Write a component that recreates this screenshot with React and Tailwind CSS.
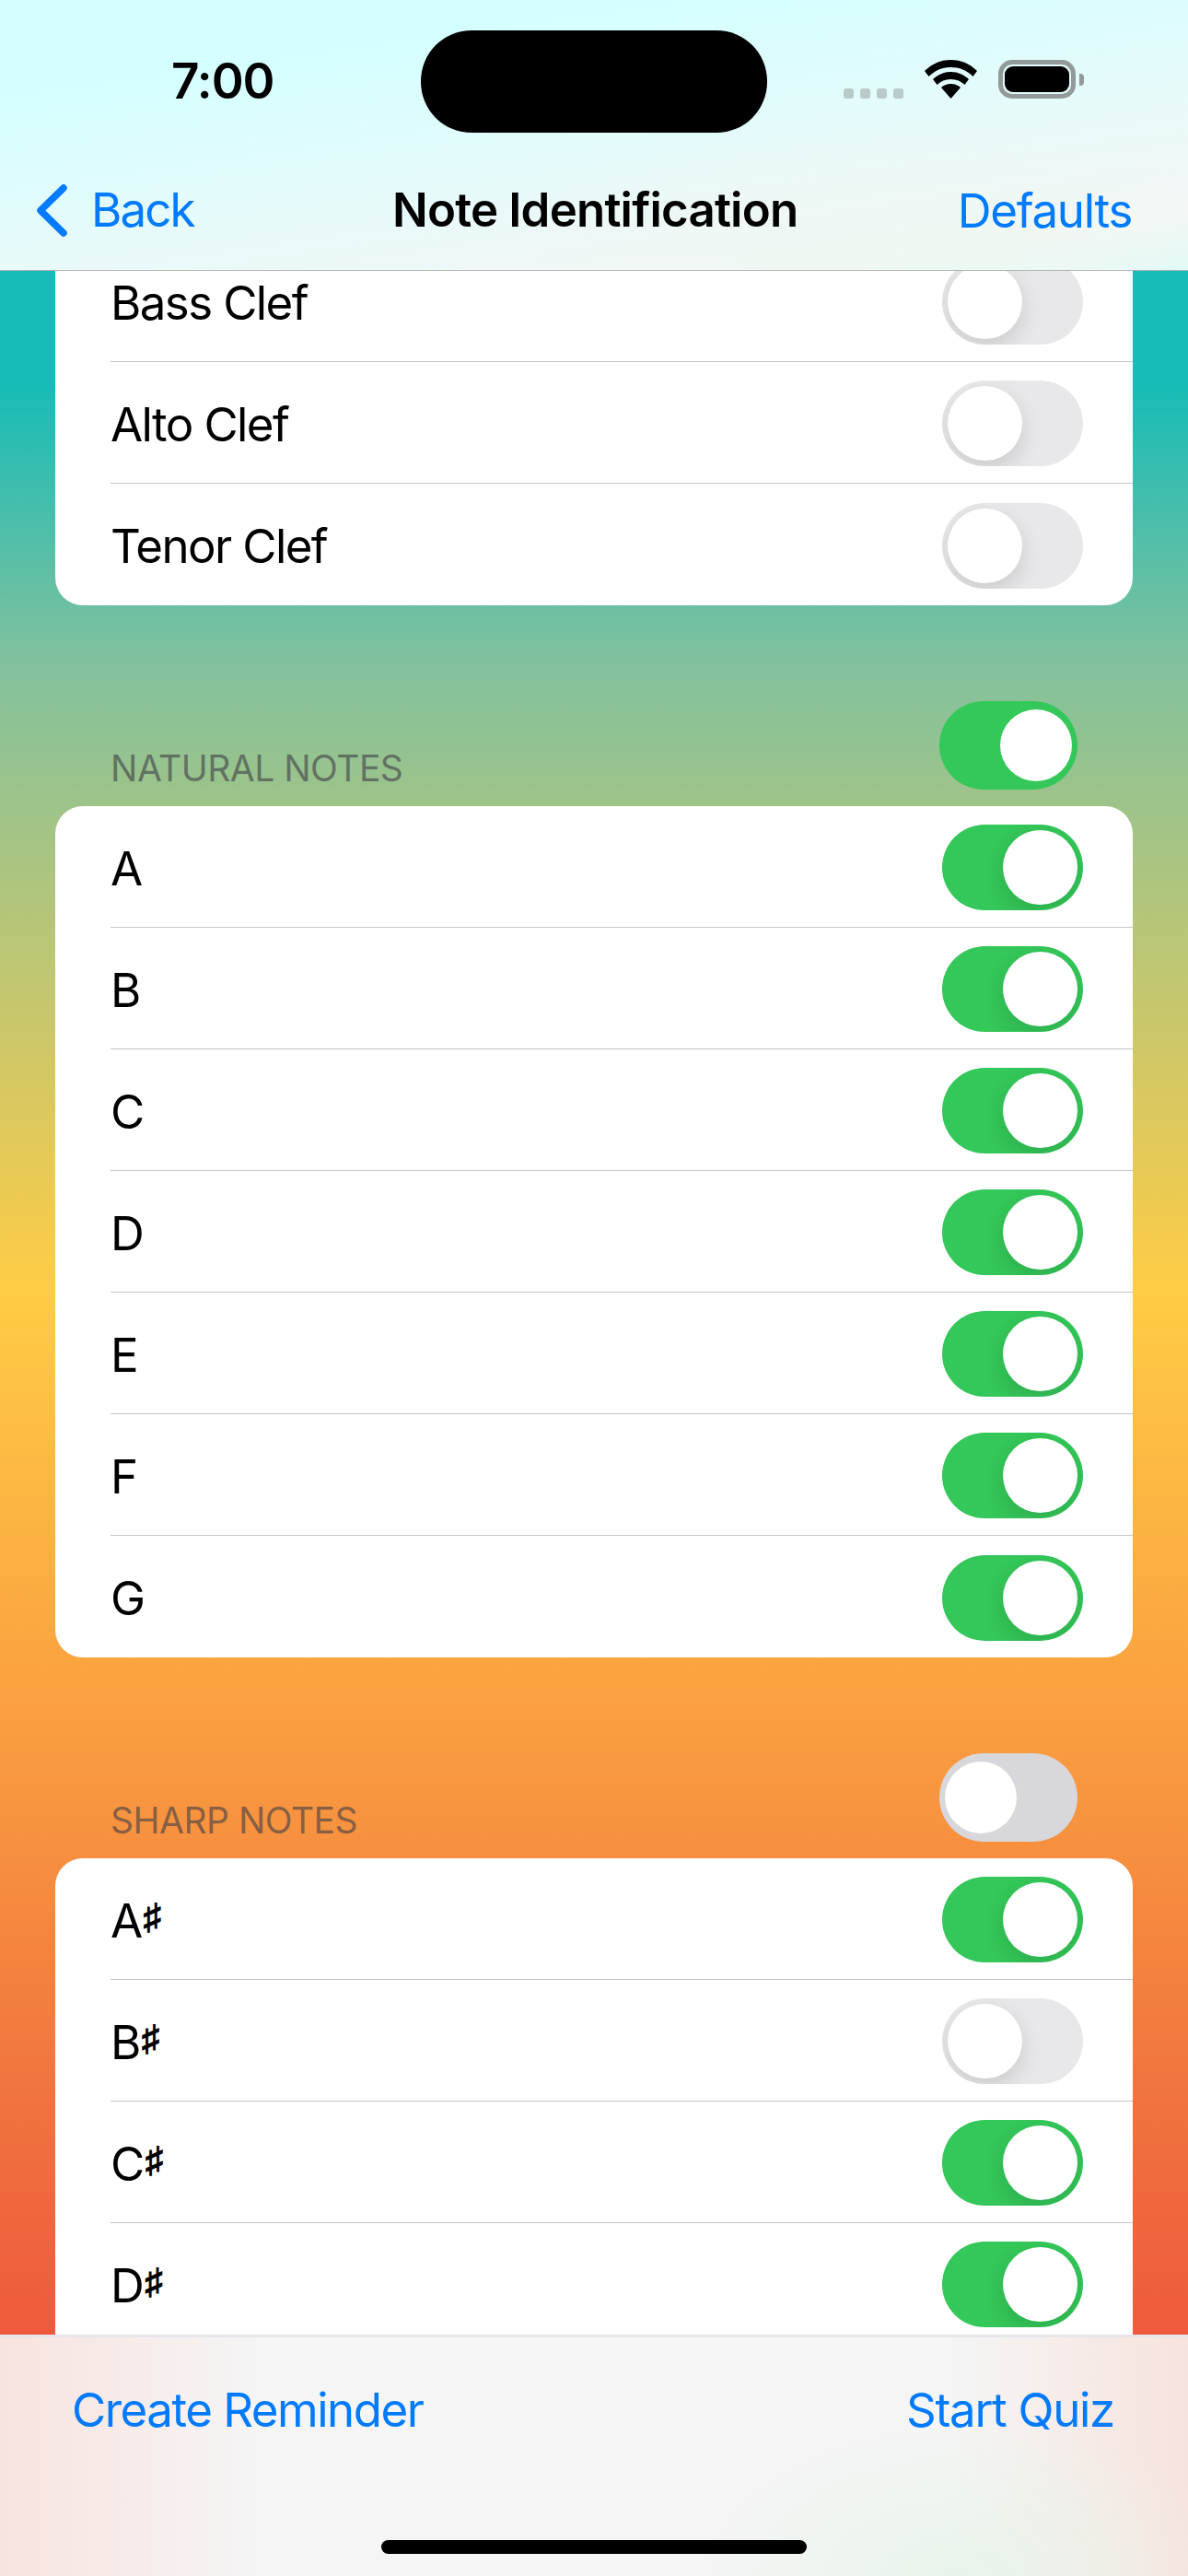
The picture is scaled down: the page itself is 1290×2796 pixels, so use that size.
const sans = "font-['Inter','Liberation_Sans',sans-serif]"

const Toggle = ({ on }) => (
    <div className={`w-[153px] h-[93px] shrink-0 rounded-full overflow-hidden flex items-center px-[6px] ${on ? "bg-[#34c759] justify-end" : "bg-[#e8e8ea] justify-start"}`}>
        <div className="w-[81px] h-[81px] rounded-full bg-white shadow-[0_9px_24px_rgba(0,0,0,0.13)]"></div>
    </div>
)

const HeaderToggle = ({ on }) => (
    <div className={`w-[150px] h-[96px] shrink-0 rounded-[48px] flex items-center px-[6px] ${on ? "bg-[#34c759] justify-end" : "bg-[#d7d7dc] justify-start"}`}>
        <div className="w-[78px] h-[78px] rounded-full bg-white"></div>
    </div>
)

const Row = ({ label, sharp, on, last }) => (
    <div className="pl-[60px]">
        <div className={`h-[132px] pt-[2px] flex items-center justify-between pr-[54px] ${last ? "" : "border-b border-[#c6c6c8]"}`}>
            <span className="pt-[3px] text-[51px] text-black tracking-[-1.6px]">
                {label}
                {sharp && <span className="ml-[2px] align-[10px] text-[38px] font-bold font-['Liberation_Sans',sans-serif] [-webkit-text-stroke:1px_black]">♯</span>}
            </span>
            <Toggle on={on} />
        </div>
    </div>
)

const Section = ({ title, on, rows, cut }) => (
    <div>
        <div className="h-[218px] flex items-end justify-between pl-[60px] pr-[60px]">
            <span className="text-[39px] leading-[47px] pb-[18px] text-[#3c3c43]/60 tracking-[-0.5px]">{title}</span>
            <div className="pb-[18px]"><HeaderToggle on={on} /></div>
        </div>
        <div className={`bg-white overflow-hidden ${cut ? "rounded-t-[30px]" : "rounded-[30px]"}`}>
            {rows.map((r, i) => <Row key={r.label} label={r.label} sharp={r.sharp} on={r.on} last={!cut && i === rows.length - 1} />)}
        </div>
    </div>
)

const naturals = ["A", "B", "C", "D", "E", "F", "G"].map((n) => ({ label: n, on: true }))
const sharps = [
    { label: "A", sharp: true, on: true },
    { label: "B", sharp: true, on: false },
    { label: "C", sharp: true, on: true },
    { label: "D", sharp: true, on: true },
]

const App = () => {
    return (
        <div className={`w-[1290px] h-[2796px] flex flex-col overflow-hidden ${sans}`}>
            <header className="h-[294px] shrink-0 border-b border-[#b2b2b2] bg-[#f5f6f6] bg-[radial-gradient(ellipse_500px_150px_at_1010px_290px,#eef8f2_0%,transparent_100%),linear-gradient(172deg,#d5ffff_0%,#d5ffff_22%,#f5f6f6_88%,transparent_100%),linear-gradient(90deg,#f5f6f6_60%,#d8fbf9_100%)]">
                <div className="h-[165px] flex items-start">
                    <div className="w-[457px] pt-[56px] pl-[186px] text-[53px] leading-[64px] font-semibold text-black tracking-[-1px]">7:00</div>
                    <div className="mt-[33px] w-[376px] h-[111px] rounded-[55px] bg-black"></div>
                    <div className="flex items-end h-[107px] pl-[83px]">
                        <div className="flex gap-[7px]">
                            <div className="w-[11px] h-[11px] rounded-[3px] bg-[#b9cbc9]"></div>
                            <div className="w-[11px] h-[11px] rounded-[3px] bg-[#b9cbc9]"></div>
                            <div className="w-[11px] h-[11px] rounded-[3px] bg-[#b9cbc9]"></div>
                            <div className="w-[11px] h-[11px] rounded-[3px] bg-[#b9cbc9]"></div>
                        </div>
                        <svg className="ml-[23px]" width="57" height="42" viewBox="0 0 57 42">
                            <path d="M28.500 0C17.500 0 8 4 0 12l4.500 6C11.500 11 19.500 8 28.500 8s17 3 24 10l4.500-6C49 4 39.500 0 28.500 0z" fill="#000" />
                            <path d="M28.500 13c-7.500 0-14 3-19.500 8l4.500 6c4-4 9-6 15-6s11 2 15 6l4.500-6c-5.500-5-12-8-19.500-8z" fill="#000" />
                            <path d="M28.500 26c-4 0-7.500 1.500-10.500 4l10.500 12L39 30c-3-2.500-6.500-4-10.500-4z" fill="#000" />
                        </svg>
                        <div className="ml-[23px] w-[84px] h-[42px] rounded-[15px] border-[5px] border-[#929a9a] p-[2px]">
                            <div className="w-full h-full rounded-[9px] bg-black"></div>
                        </div>
                        <div className="ml-[4px] mb-[14px] w-[5px] h-[13px] rounded-r-[4px] bg-[#929a9a]"></div>
                    </div>
                </div>
                <nav className="h-[126px] relative flex items-center justify-between pl-[40px] pr-[61px] text-[51px] text-[#007aff]">
                    <div className="flex items-center gap-[26px]">
                        <svg width="33" height="57" viewBox="0 0 33 57" fill="none">
                            <path d="M29 4 4 28.500 29 53" stroke="#007aff" strokeWidth="7.500" strokeLinecap="round" strokeLinejoin="round" />
                        </svg>
                        <span className="tracking-[-1.9px]">Back</span>
                    </div>
                    <span className="absolute left-[426px] font-semibold text-black tracking-[-0.8px]">Note Identification</span>
                    <span className="tracking-[-1.3px] pt-[2px]">Defaults</span>
                </nav>
            </header>

            <main className="flex-1 min-h-0 overflow-hidden px-[60px] bg-[linear-gradient(180deg,#16bcb7_0px,#16bcb7_123px,#82c19d_426px,#ffcc45_1105px,#fa9f40_1566px,#f0733e_1986px,#ee5a3c_2240px)]">
                <div className="-mt-[33px] bg-white rounded-b-[30px] overflow-hidden">
                    <Row label="Bass Clef" />
                    <Row label="Alto Clef" />
                    <Row label="Tenor Clef" last />
                </div>
                <Section title="NATURAL NOTES" on rows={naturals} />
                <Section title="SHARP NOTES" rows={sharps} cut />
            </main>

            <footer className="h-[262px] shrink-0 border-t-[3px] border-[#e5e5ea] bg-[#f5f5f5] bg-[radial-gradient(ellipse_300px_180px_at_1040px_262px,#e8f4ea_0%,transparent_100%),linear-gradient(90deg,#f8e3df_0%,#f5f5f5_22%,#f5f5f5_80%,#f7e3dd_100%)]">
                <div className="flex justify-between pl-[78px] pr-[80px] pt-[48px] text-[51px] leading-[62px] text-[#007aff] tracking-[-1.3px]">
                    <span className="tracking-[-1.5px]">Create Reminder</span>
                    <span>Start Quiz</span>
                </div>
                <div className="mt-[110px] mx-auto w-[462px] h-[15px] rounded-full bg-black"></div>
            </footer>
        </div>
    )
}

export default App
